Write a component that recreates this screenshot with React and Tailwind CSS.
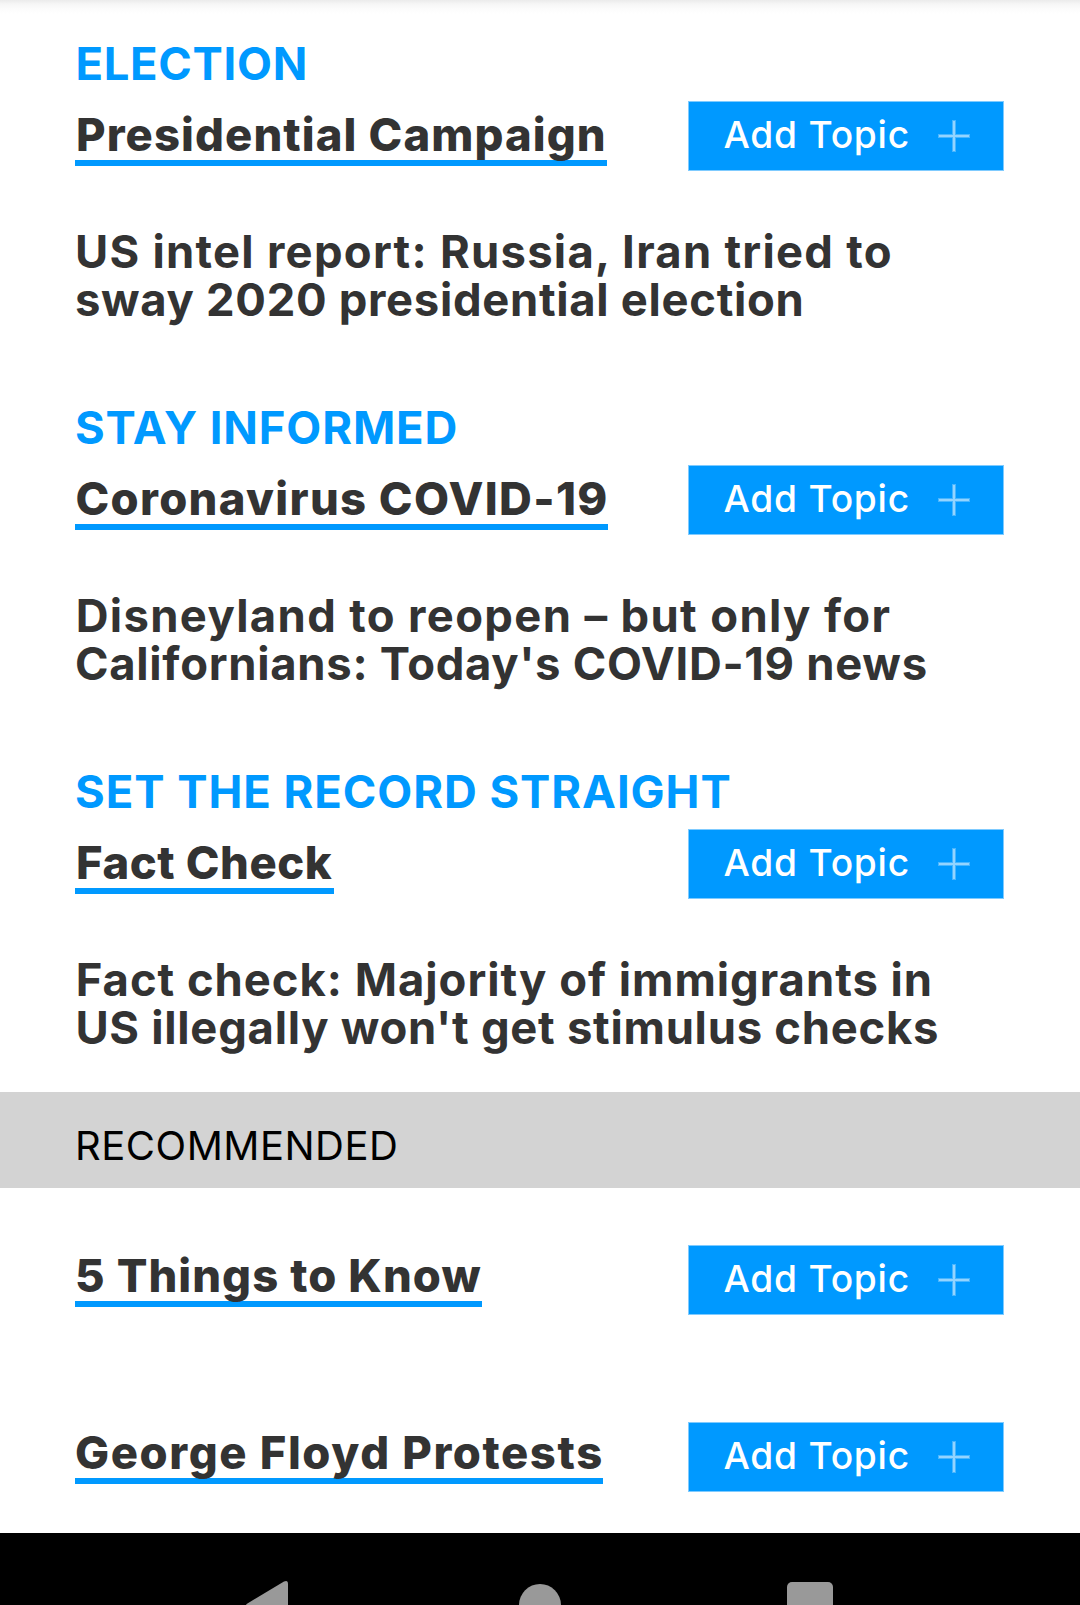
const sections = [
  {
    label: "ELECTION",
    labelClass: "tracking-[0.7px] ml-[0.4px]",
    title: "Presidential Campaign",
    titleClass: "w-[532px] tracking-[1.1px] pl-px",
    lines: [
      ["US intel report: Russia, Iran tried to", "tracking-[1.27px]"],
      ["sway 2020 presidential election", "tracking-[0.7px]"],
    ],
  },
  {
    label: "STAY INFORMED",
    labelClass: "tracking-[0.89px]",
    title: "Coronavirus COVID-19",
    titleClass: "w-[533px] tracking-[1.36px] pl-[0.4px]",
    lines: [
      ["Disneyland to reopen – but only for", "tracking-[1.35px] ml-[0.7px]"],
      ["Californians: Today's COVID-19 news", "tracking-[0.71px]"],
    ],
  },
  {
    label: "SET THE RECORD STRAIGHT",
    labelClass: "tracking-[0.95px]",
    title: "Fact Check",
    titleClass: "w-[259px] tracking-[0.55px] pl-px",
    lines: [
      ["Fact check: Majority of immigrants in", "tracking-[0.98px] ml-[0.7px]"],
      ["US illegally won't get stimulus checks", "tracking-[0.73px] ml-[0.4px]"],
    ],
  },
];

const recommended = [
  ["5 Things to Know", "w-[407px] tracking-[1.06px]"],
  ["George Floyd Protests", "w-[528px] tracking-[1.6px]"],
];

function AddTopicButton() {
  return (
    <button
      type="button"
      className="flex h-[70px] w-[316px] shrink-0 items-start justify-between border border-[#7fcbff] bg-[#0099ff] pt-[10px] pr-[33px] pl-[34.5px] text-white"
    >
      <span className="whitespace-nowrap text-[37.2px] leading-[45px] font-[450] tracking-[0.76px]">
        Add Topic
      </span>
      <svg viewBox="0 0 32 32" className="mt-2 h-8 w-8" fill="#fff" aria-hidden="true">
        <path fillOpacity="0.28" d="M14 0h4v32h-4zM0 14h4v4H0zM4 14h10v4H4zM18 14h14v4H18z" />
        <path fillOpacity="0.42" d="M15 1h2v30h-2zM1 15h14v2H1zM17 15h14v2H17z" />
      </svg>
    </button>
  );
}

function TopicRow({ title, titleClass, offset }) {
  return (
    <div className="flex items-start justify-between">
      <h2
        className={`${offset} ${titleClass} h-[57px] border-b-[6px] border-[#0099ff] text-[45.4px] leading-[51px] font-[790] whitespace-nowrap`}
      >
        {title}
      </h2>
      <AddTopicButton />
    </div>
  );
}

function Section({ label, labelClass, title, titleClass, lines }) {
  return (
    <section className="h-[364px] pt-10 pr-[76px] pl-[75px]">
      <p className={`${labelClass} mb-[14px] text-[45.4px] leading-[47px] font-[660] whitespace-nowrap text-[#0099ff]`}>
        {label}
      </p>
      <TopicRow title={title} titleClass={titleClass} offset="mt-2" />
      <p className="mt-[57px] text-[45.4px] leading-[48px] font-[650] whitespace-nowrap">
        {lines.map(([text, lineClass]) => (
          <span key={text} className={`block ${lineClass}`}>
            {text}
          </span>
        ))}
      </p>
    </section>
  );
}

export default function App() {
  return (
    <div className="h-[1605px] w-[1080px] overflow-hidden bg-white font-['Inter',sans-serif] text-[#333]">
      <main className="h-[1533px] bg-[linear-gradient(to_bottom,#ebebeb_0px,#f6f6f6_4px,#fcfcfc_9px,#fff_14px)]">
        {sections.map((section) => (
          <Section key={section.label} {...section} />
        ))}
        <div className="h-24 bg-[#d3d3d3] pt-[29px] pl-[75px]">
          <p className="text-[40px] leading-[49px] tracking-[0.51px] text-black">RECOMMENDED</p>
        </div>
        <section className="flex flex-col gap-[107px] pt-[57px] pr-[76px] pl-[75px]">
          {recommended.map(([title, titleClass]) => (
            <TopicRow key={title} title={title} titleClass={titleClass} offset="mt-[5px]" />
          ))}
        </section>
      </main>
      <nav className="flex h-[144px] items-center bg-black pl-[245px] text-[#999]">
        <svg viewBox="0 0 43 50" className="h-[50px] w-[43px]" fill="currentColor" aria-hidden="true">
          <path d="M39 1.6 Q43 -.2 43 4 V46 Q43 50.2 39 48.4 L2 26.3 Q0 25 2 23.7Z" />
        </svg>
        <span className="ml-[231px] h-[42px] w-[42px] rounded-full bg-current" />
        <span className="ml-[226px] h-[46px] w-[46px] rounded-[5px] bg-current" />
      </nav>
    </div>
  );
}
